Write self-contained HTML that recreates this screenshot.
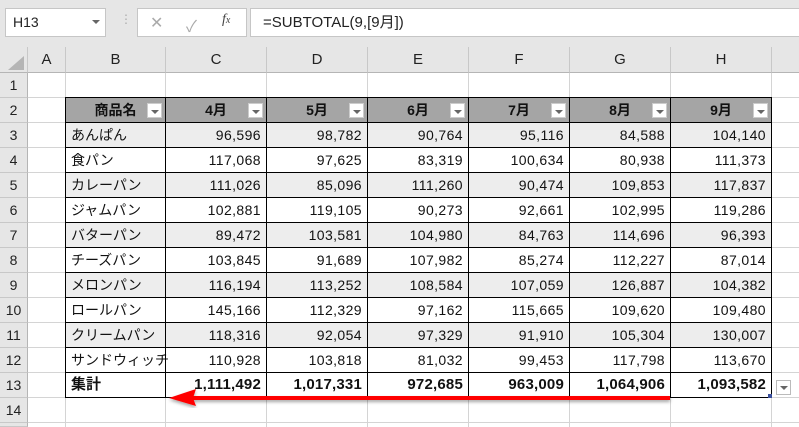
<!DOCTYPE html><html><head><meta charset="utf-8"><style>
*{margin:0;padding:0;box-sizing:border-box}
html,body{width:799px;height:427px;overflow:hidden}
body{background:#fff;font-family:"Liberation Sans","Noto Sans CJK JP",sans-serif;position:relative}
.a{position:absolute}
.ch{position:absolute;top:47px;height:26px;background:#e6e6e6;border-right:1px solid #c8c8c8;border-bottom:1px solid #b5b5b5;text-align:center;font-size:15px;line-height:26px;color:#222}
.rh{position:absolute;left:0;width:28px;height:25px;background:#e6e6e6;border-bottom:1px solid #c8c8c8;border-right:1px solid #b5b5b5;text-align:center;font-size:14px;line-height:25px;color:#222}
.c{position:absolute;height:26px;border:1px solid #000;margin-left:-1px;margin-top:-1px;font-size:14px;line-height:24px;padding:0 5px;text-align:right;color:#111;white-space:nowrap;letter-spacing:0.4px}
.h{background:#a5a5a5;font-weight:bold;text-align:center;letter-spacing:0}
.g{background:#ededed}
.dd{position:absolute;right:3px;top:5px;width:15px;height:15px;background:#fff;border:1px solid #ccc}
.dd:after{content:"";position:absolute;left:3px;top:6px;border-left:4px solid transparent;border-right:4px solid transparent;border-top:4px solid #666}
.b{font-weight:bold;font-size:15px;letter-spacing:0.2px}
</style></head><body>
<div class="a" style="left:0;top:0;width:799px;height:47px;background:#e6e6e6"></div>
<div class="a" style="left:5px;top:8px;width:101px;height:29px;background:#fff;border:1px solid #c6c6c6;font-size:14px;line-height:27px;padding-left:7px;color:#222">H13</div>
<div class="a" style="left:92px;top:20px;border-left:4px solid transparent;border-right:4px solid transparent;border-top:4px solid #666"></div>
<div class="a" style="left:120px;top:12px;color:#aaa;font-size:12px">⋮</div>
<div class="a" style="left:137px;top:8px;width:110px;height:29px;background:#fff;border:1px solid #c6c6c6"></div>
<div class="a" style="left:150px;top:13px;color:#aaa;font-size:16px">✕</div>
<div class="a" style="left:186px;top:13px;color:#aaa;font-size:16px">✓</div>
<div class="a" style="left:222px;top:12px;color:#444;font-size:14px;font-style:italic;font-family:'Liberation Serif',serif">f<span style="font-size:10px">x</span></div>
<div class="a" style="left:250px;top:8px;width:560px;height:29px;background:#fff;border:1px solid #c6c6c6;font-size:15px;line-height:27px;padding-left:12px;color:#222">=SUBTOTAL(9,[9月])</div>
<div class="ch" style="left:0;width:28px"></div>
<div class="a" style="left:8px;top:56px;width:0;height:0;border-left:16px solid transparent;border-bottom:14px solid #b5b5b5"></div>
<div class="ch" style="left:28px;width:38px">A</div><div class="ch" style="left:66px;width:100px">B</div><div class="ch" style="left:166px;width:101px">C</div><div class="ch" style="left:267px;width:101px">D</div><div class="ch" style="left:368px;width:101px">E</div><div class="ch" style="left:469px;width:101px">F</div><div class="ch" style="left:570px;width:101px">G</div><div class="ch" style="left:671px;width:101px">H</div><div class="ch" style="left:772px;width:40px"></div>
<svg class="a" style="left:28px;top:73px" width="771" height="354"><g stroke="#d4d4d4" stroke-width="1">
<line x1="37.5" y1="0" x2="37.5" y2="354"/><line x1="137.5" y1="0" x2="137.5" y2="354"/><line x1="238.5" y1="0" x2="238.5" y2="354"/><line x1="339.5" y1="0" x2="339.5" y2="354"/><line x1="440.5" y1="0" x2="440.5" y2="354"/><line x1="541.5" y1="0" x2="541.5" y2="354"/><line x1="642.5" y1="0" x2="642.5" y2="354"/><line x1="743.5" y1="0" x2="743.5" y2="354"/>
<line x1="0" y1="24.5" x2="771" y2="24.5"/><line x1="0" y1="49.5" x2="771" y2="49.5"/><line x1="0" y1="74.5" x2="771" y2="74.5"/><line x1="0" y1="99.5" x2="771" y2="99.5"/><line x1="0" y1="124.5" x2="771" y2="124.5"/><line x1="0" y1="149.5" x2="771" y2="149.5"/><line x1="0" y1="174.5" x2="771" y2="174.5"/><line x1="0" y1="199.5" x2="771" y2="199.5"/><line x1="0" y1="224.5" x2="771" y2="224.5"/><line x1="0" y1="249.5" x2="771" y2="249.5"/><line x1="0" y1="274.5" x2="771" y2="274.5"/><line x1="0" y1="299.5" x2="771" y2="299.5"/><line x1="0" y1="324.5" x2="771" y2="324.5"/><line x1="0" y1="349.5" x2="771" y2="349.5"/></g></svg>
<div class="rh" style="top:73px">1</div><div class="rh" style="top:98px">2</div><div class="rh" style="top:123px">3</div><div class="rh" style="top:148px">4</div><div class="rh" style="top:173px">5</div><div class="rh" style="top:198px">6</div><div class="rh" style="top:223px">7</div><div class="rh" style="top:248px">8</div><div class="rh" style="top:273px">9</div><div class="rh" style="top:298px">10</div><div class="rh" style="top:323px">11</div><div class="rh" style="top:348px">12</div><div class="rh" style="top:373px">13</div><div class="rh" style="top:398px">14</div><div class="rh" style="top:423px;height:4px"></div>
<div id="t"></div>
<script>
var X=[66,166,267,368,469,570,671,772];
var H=["商品名","4月","5月","6月","7月","8月","9月"];
var D=[["あんぱん","96,596","98,782","90,764","95,116","84,588","104,140"],["食パン","117,068","97,625","83,319","100,634","80,938","111,373"],["カレーパン","111,026","85,096","111,260","90,474","109,853","117,837"],["ジャムパン","102,881","119,105","90,273","92,661","102,995","119,286"],["バターパン","89,472","103,581","104,980","84,763","114,696","96,393"],["チーズパン","103,845","91,689","107,982","85,274","112,227","87,014"],["メロンパン","116,194","113,252","108,584","107,059","126,887","104,382"],["ロールパン","145,166","112,329","97,162","115,665","109,620","109,480"],["クリームパン","118,316","92,054","97,329","91,910","105,304","130,007"],["サンドウィッチ","110,928","103,818","81,032","99,453","117,798","113,670"],["集計","1,111,492","1,017,331","972,685","963,009","1,064,906","1,093,582"]];
var s="";
for(var i=0;i<7;i++)s+='<div class="c h" style="left:'+X[i]+'px;top:98px;width:'+(X[i+1]-X[i]+1)+'px">'+H[i]+'<span class="dd"></span></div>';
D.forEach(function(r,j){var y=123+25*j;var cl=(j==10)?" b":(j%2==0?" g":"");
for(var i=0;i<7;i++)s+='<div class="c'+cl+'" style="left:'+X[i]+'px;top:'+y+'px;width:'+(X[i+1]-X[i]+1)+'px;'+(i==0?'text-align:left;letter-spacing:0;':'')+(j==10?'background:#fff;':'')+'">'+r[i]+'</div>';});
document.getElementById("t").innerHTML=s;
</script>
<div class="a" style="left:776px;top:380px;width:15px;height:15px;background:#fff;border:1px solid #bbb"></div>
<div class="a" style="left:780px;top:386px;border-left:4px solid transparent;border-right:4px solid transparent;border-top:4px solid #666"></div>
<div class="a" style="left:768px;top:394px;width:4px;height:4px;background:#3a4f9c"></div>
<svg class="a" style="left:160px;top:385px" width="520" height="30"><defs><filter id="s"><feDropShadow dx="0" dy="2" stdDeviation="1.5" flood-opacity="0.35"/></filter></defs><g filter="url(#s)"><line x1="30" y1="13" x2="510" y2="13" stroke="#f00" stroke-width="4"/><polygon points="9,13 36,4 33,13 36,21" fill="#f00"/></g></svg>
</body></html>
